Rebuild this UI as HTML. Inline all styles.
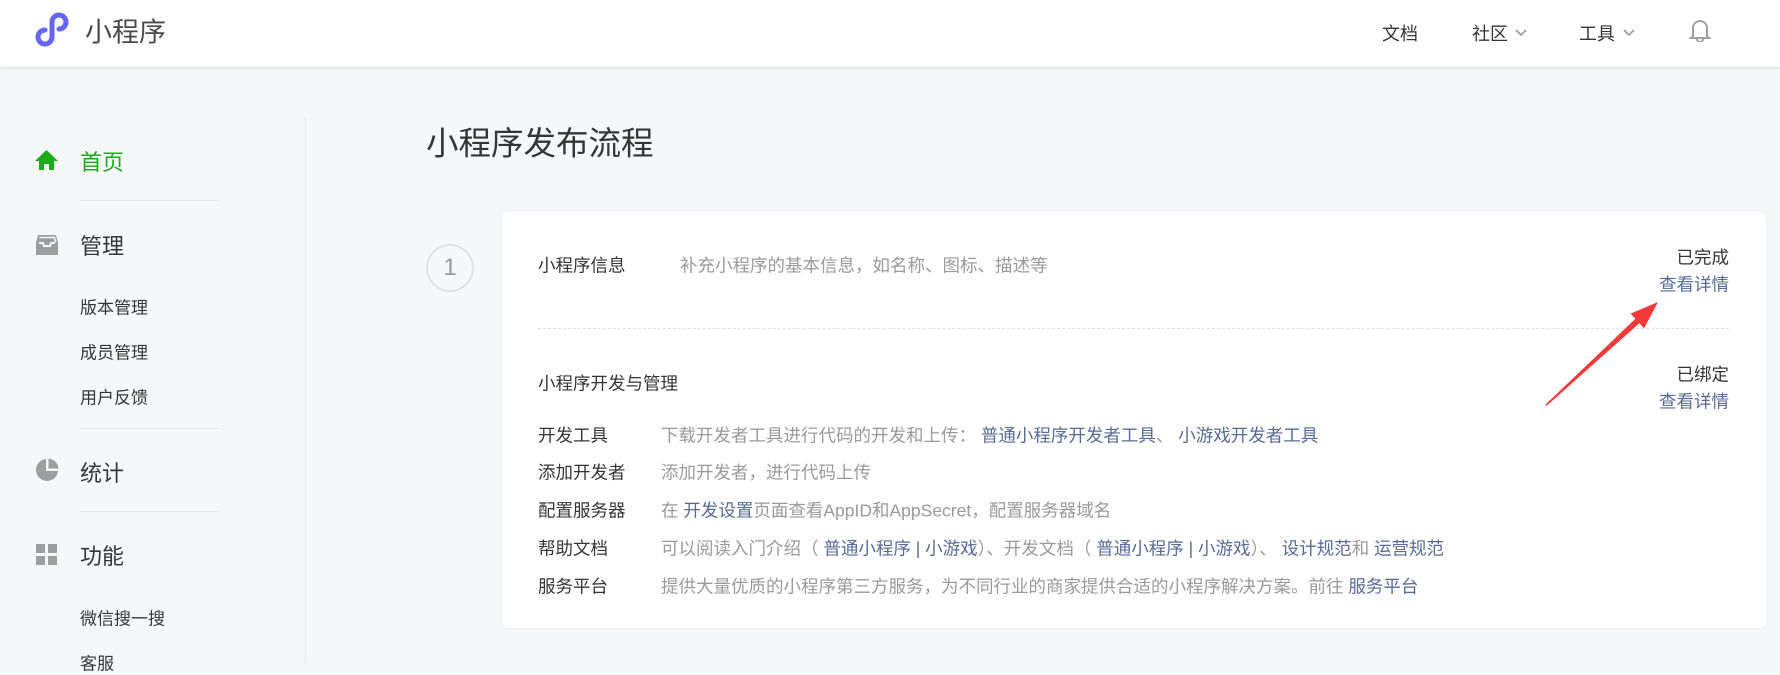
<!DOCTYPE html>
<html><head><meta charset="utf-8"><style>
*{margin:0;padding:0;box-sizing:border-box}
body{width:1780px;height:663px;overflow:hidden;background:#f6f7f9;font-family:"Liberation Sans","Noto Sans CJK SC",sans-serif;color:#353535;position:relative}
.hdr{position:absolute;left:0;top:0;width:1780px;height:67px;background:#fff;box-shadow:0 1px 3px rgba(0,0,0,.12)}
.abs{position:absolute;white-space:nowrap}
.nav{font-size:18px;color:#353535;top:33px;transform:translateY(-50%)}
.side{font-size:17px;left:80px;transform:translateY(-50%)}
.big{font-size:22px;left:80px;transform:translateY(-50%)}
.line{position:absolute;left:80px;width:138px;height:1px;background:#e4e6ea}
.card{position:absolute;left:502px;top:212px;width:1264px;height:416px;background:#fff;border-radius:6px;box-shadow:0 1px 2px rgba(0,0,0,.05)}
.t{font-size:17.5px;transform:translateY(-50%)}
.g{color:#9a9a9a}
a{color:#576b95;text-decoration:none}
.r{right:51px;text-align:right}
</style></head><body>
<div class="hdr"></div>
<svg class="abs" style="left:34px;top:12px" width="40" height="35" viewBox="0 0 40 35"><path d="M18 11 V25 A7 7 0 1 1 11 18 M18 24 V10 A7 7 0 1 1 25 17" fill="none" stroke="#6467f0" stroke-width="5" stroke-linecap="round"/></svg>
<div class="abs" style="left:85px;top:30px;transform:translateY(-50%);font-size:27px;color:#4a4a4a">小程序</div>
<div class="abs nav" style="left:1382px">文档</div>
<div class="abs nav" style="left:1472px">社区</div>
<svg class="abs" style="left:1514px;top:28px" width="14" height="10"><path d="M2 2 L7 7 L12 2" fill="none" stroke="#999" stroke-width="1.6"/></svg>
<div class="abs nav" style="left:1579px">工具</div>
<svg class="abs" style="left:1622px;top:28px" width="14" height="10"><path d="M2 2 L7 7 L12 2" fill="none" stroke="#999" stroke-width="1.6"/></svg>
<svg class="abs" style="left:1689px;top:18px" width="22" height="24" viewBox="0 0 22 24"><path d="M4 18 V10 A7 7 0 0 1 18 10 V18 L20 20 H2 Z M8 21 A3 3 0 0 0 14 21" fill="none" stroke="#a0a0a0" stroke-width="2"/></svg>

<div class="abs" style="left:305px;top:118px;width:1px;height:545px;background:#e4e6ea"></div>
<svg class="abs" style="left:34px;top:149px" width="25" height="22" viewBox="0 0 25 22"><path d="M12.5 1 L24 12 H20 V21 H15 V15 H10 V21 H5 V12 H1 Z" fill="#1aad19"/></svg>
<div class="abs big" style="top:161px;color:#1aad19">首页</div>
<div class="line" style="top:200px"></div>
<svg class="abs" style="left:35px;top:234px" width="24" height="22" viewBox="0 0 24 22"><path d="M3 1 H21 L23 9 V21 H1 V9 Z" fill="#9e9e9e"/><path d="M4 9 H8 L9 12 H15 L16 9 H20" fill="none" stroke="#f6f7f9" stroke-width="2"/><path d="M4.5 3.5 H19.5 L20.5 8" fill="none" stroke="#f6f7f9" stroke-width="1.5"/></svg>
<div class="abs big" style="top:245px">管理</div>
<div class="abs side" style="top:306px">版本管理</div>
<div class="abs side" style="top:351px">成员管理</div>
<div class="abs side" style="top:396px">用户反馈</div>
<div class="line" style="top:428px"></div>
<svg class="abs" style="left:35px;top:458px" width="24" height="24" viewBox="0 0 24 24"><path d="M11 1 A11 11 0 1 0 23 13 H11 Z" fill="#9e9e9e"/><path d="M13.5 0.5 A11 11 0 0 1 23.5 10.5 H13.5 Z" fill="#9e9e9e"/></svg>
<div class="abs big" style="top:472px">统计</div>
<div class="line" style="top:511px"></div>
<svg class="abs" style="left:36px;top:544px" width="22" height="22"><rect x="0" y="0" width="9" height="9" fill="#9e9e9e"/><rect x="12" y="0" width="9" height="9" fill="#9e9e9e"/><rect x="0" y="12" width="9" height="9" fill="#9e9e9e"/><rect x="12" y="12" width="9" height="9" fill="#9e9e9e"/></svg>
<div class="abs big" style="top:555px">功能</div>
<div class="abs side" style="top:617px">微信搜一搜</div>
<div class="abs side" style="top:662px">客服</div>

<div class="abs" style="left:426px;top:141px;transform:translateY(-50%);font-size:32.5px;color:#353535">小程序发布流程</div>
<div class="abs" style="left:426px;top:244px;width:48px;height:48px;border:2px solid #e2e2e2;border-radius:50%;text-align:center;line-height:44px;font-size:24px;color:#9a9a9a">1</div>

<div class="card"></div>
<div class="abs t" style="left:538px;top:265px">小程序信息</div>
<div class="abs t g" style="left:680px;top:265px">补充小程序的基本信息，如名称、图标、描述等</div>
<div class="abs t r" style="top:257px">已完成</div>
<div class="abs t r" style="top:284px"><a>查看详情</a></div>
<div class="abs" style="left:538px;top:328px;width:1191px;border-top:1px dashed #e2e2e2"></div>
<div class="abs t" style="left:538px;top:383px">小程序开发与管理</div>
<div class="abs t r" style="top:374px">已绑定</div>
<div class="abs t r" style="top:401px"><a>查看详情</a></div>
<div class="abs t" style="left:538px;top:435px">开发工具</div>
<div class="abs t g" style="left:661px;top:435px">下载开发者工具进行代码的开发和上传： <a>普通小程序开发者工具</a>、 <a>小游戏开发者工具</a></div>
<div class="abs t" style="left:538px;top:472px">添加开发者</div>
<div class="abs t g" style="left:661px;top:472px">添加开发者，进行代码上传</div>
<div class="abs t" style="left:538px;top:510px">配置服务器</div>
<div class="abs t g" style="left:661px;top:510px">在 <a>开发设置</a>页面查看AppID和AppSecret，配置服务器域名</div>
<div class="abs t" style="left:538px;top:548px">帮助文档</div>
<div class="abs t g" style="left:661px;top:548px">可以阅读入门介绍（ <a>普通小程序 | 小游戏</a>）、开发文档（ <a>普通小程序 | 小游戏</a>）、 <a>设计规范</a>和 <a>运营规范</a></div>
<div class="abs t" style="left:538px;top:586px">服务平台</div>
<div class="abs t g" style="left:661px;top:586px">提供大量优质的小程序第三方服务，为不同行业的商家提供合适的小程序解决方案。前往 <a>服务平台</a></div>

<svg class="abs" style="left:0;top:0" width="1780" height="663"><path d="M1545 405 L1547 405.5 L1639.4 323.2 L1644 328.4 L1658 302 L1630.6 313.6 L1635.4 318.8 Z" fill="#f23a3a"/></svg>
</body></html>
